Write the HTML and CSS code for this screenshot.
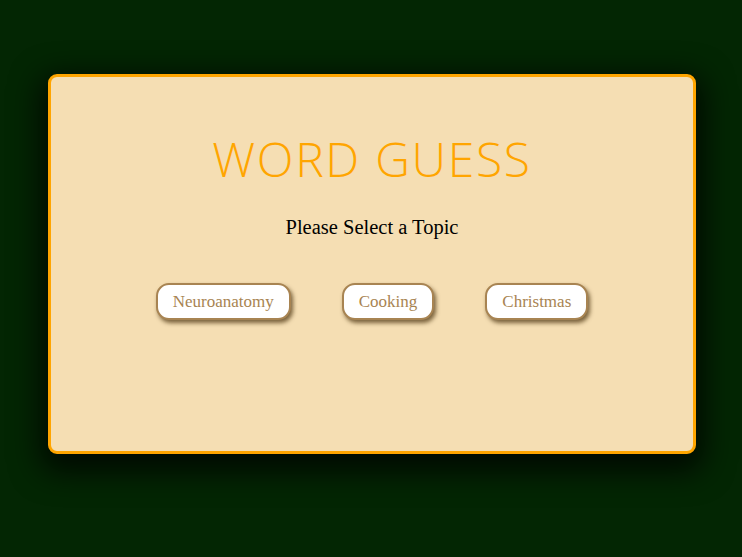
FILE: index.html
```html
<!DOCTYPE html>
<html>
<head>
<meta charset="utf-8">
<link rel="stylesheet" href="styles.css">
</head>
<body>
<div class="page">
  <main class="card">
    <h1 class="title">WORD GUESS</h1>
    <p class="subtitle">Please Select a Topic</p>
    <div class="topics">
      <button class="topic">Neuroanatomy</button>
      <button class="topic">Cooking</button>
      <button class="topic">Christmas</button>
    </div>
  </main>
</div>
</body>
</html>
```
FILE: styles.css
```css
html, body {
  margin: 0;
  padding: 0;
  height: 100%;
  background: #032603;
}
.page {
  padding: 74px 46px 0 48px;
}
.card {
  box-sizing: border-box;
  width: 648px;
  height: 380px;
  background: #f5deb3;
  border: 3px solid #ffa500;
  border-radius: 9px;
  box-shadow: 0 10px 30px 8px rgba(0,0,0,0.75);
  display: flex;
  flex-direction: column;
  align-items: center;
}
.title {
  margin: 57px 0 0 0;
  font-family: "Open Sans", sans-serif;
  font-weight: 300;
  font-size: 48px;
  line-height: 50px;
  letter-spacing: 1.7px;
  color: #ffa500;
}
.subtitle {
  margin: 31px 0 0 0;
  font-family: "Liberation Serif", serif;
  font-size: 20.5px;
  line-height: 24px;
  color: #000;
}
.topics {
  margin-top: 44px;
  display: flex;
  gap: 51px;
}
.topic {
  box-sizing: border-box;
  height: 37px;
  padding: 0 15px;
  background: #fff;
  border: 2px solid #a88452;
  border-radius: 13px;
  box-shadow: 2px 3px 4px rgba(70,45,10,0.7);
  font-family: "Liberation Serif", serif;
  font-size: 17px;
  color: #a88452;
}
```
